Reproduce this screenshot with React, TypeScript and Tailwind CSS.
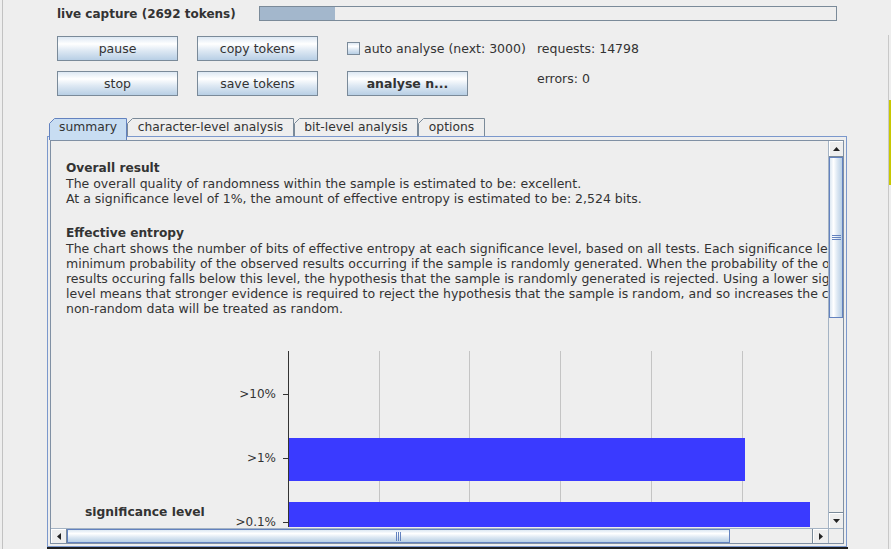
import React from 'react';

const oceanV = 'bg-[linear-gradient(to_bottom,#dde8f3_0%,#ffffff_30%,#dde8f3_60%,#b8cfe5_100%)]';
const oceanH = 'bg-[linear-gradient(to_right,#dde8f3_0%,#ffffff_30%,#dde8f3_60%,#b8cfe5_100%)]';

const paragraph = [
  'The chart shows the number of bits of effective entropy at each significance level, based on all tests. Each significance level defines a',
  'minimum probability of the observed results occurring if the sample is randomly generated. When the probability of the observed',
  'results occuring falls below this level, the hypothesis that the sample is randomly generated is rejected. Using a lower significance',
  'level means that stronger evidence is required to reject the hypothesis that the sample is random, and so increases the chance that',
  'non-random data will be treated as random.',
];

function Button({ children, bold }: { children: React.ReactNode; bold?: boolean }) {
  return (
    <button
      className={`w-[121px] h-[25px] flex-none flex items-center justify-center pt-px border border-[#7a8a99] ${oceanV} text-[12.5px] text-[#333] ${bold ? 'font-bold' : ''}`}
    >
      {children}
    </button>
  );
}

function Tab({ label, width, selected }: { label: string; width: number; selected?: boolean }) {
  const h = selected ? 22 : 18;
  return (
    <div className={`relative flex-none ${selected ? 'h-[22px] z-10' : 'h-[18px]'}`} style={{ width }}>
      <svg className="absolute inset-0" width={width} height={h}>
        <path
          d={`M0.5 ${h} V5.5 L5.5 0.5 H${width - 0.5} V${h}`}
          fill={selected ? '#c8ddf2' : '#eeeeee'}
          stroke={selected ? '#6382bf' : '#7a8a99'}
        />
      </svg>
      <span className="relative block text-center leading-[18px] text-[12.3px] text-[#333]">{label}</span>
    </div>
  );
}

function Arrow({ dir }: { dir: 'up' | 'down' | 'left' | 'right' }) {
  const d = {
    up: 'M0 4 L3.5 0 L7 4 Z',
    down: 'M0 0 L7 0 L3.5 4 Z',
    left: 'M4 0 L4 7 L0 3.5 Z',
    right: 'M0 0 L4 3.5 L0 7 Z',
  }[dir];
  const vertical = dir === 'up' || dir === 'down';
  return (
    <svg width={vertical ? 7 : 4} height={vertical ? 4 : 7}>
      <path d={d} fill="#222" />
    </svg>
  );
}

function VScroll() {
  return (
    <div className="w-[15px] flex-none flex flex-col border-l border-[#a4b3c4] bg-[#eeeeee]">
      <div className="h-[16px] flex-none flex items-center justify-center border-b border-[#7a8a99] bg-[#eeeeee] shadow-[inset_1px_1px_0_#ffffff]">
        <Arrow dir="up" />
      </div>
      <div className={`h-[161px] flex-none flex items-center justify-center border border-[#6382bf] ${oceanH}`}>
        <div className="flex flex-col gap-px">
          <div className="w-[9px] h-px bg-[#6382bf]" />
          <div className="w-[9px] h-px bg-[#6382bf]" />
          <div className="w-[9px] h-px bg-[#6382bf]" />
        </div>
      </div>
      <div className="flex-1" />
      <div className="h-[16px] flex-none flex items-center justify-center border-t border-[#7a8a99] bg-[#eeeeee] shadow-[inset_1px_1px_0_#ffffff]">
        <Arrow dir="down" />
      </div>
    </div>
  );
}

function HScroll() {
  return (
    <div className="flex-1 flex border-t border-[#a4b3c4] bg-[#eeeeee]">
      <div className="w-[16px] flex-none flex items-center justify-center border-r border-[#7a8a99] shadow-[inset_1px_1px_0_#ffffff]">
        <Arrow dir="left" />
      </div>
      <div className={`w-[663px] flex-none flex items-center justify-center border border-[#6382bf] ${oceanV}`}>
        <div className="flex gap-px">
          <div className="w-px h-[9px] bg-[#6382bf]" />
          <div className="w-px h-[9px] bg-[#6382bf]" />
          <div className="w-px h-[9px] bg-[#6382bf]" />
        </div>
      </div>
      <div className="flex-1" />
      <div className="w-[16px] flex-none flex items-center justify-center border-l border-[#7a8a99] shadow-[inset_1px_1px_0_#ffffff]">
        <Arrow dir="right" />
      </div>
    </div>
  );
}

function Chart() {
  const grid = [328, 418, 509, 600, 691];
  const ticks = [
    { y: 64, label: '>10%' },
    { y: 128, label: '>1%' },
    { y: 192, label: '>0.1%' },
  ];
  return (
    <svg width={776} height={197} className="block flex-none mt-[14px]">
      {grid.map((x) => (
        <line key={x} x1={x + 0.5} x2={x + 0.5} y1={21} y2={197} stroke="#c4c4c4" />
      ))}
      <rect x={238} y={108} width={456} height={43} fill="#3a3aff" />
      <rect x={238} y={172} width={521} height={43} fill="#3a3aff" />
      <line x1={237.5} x2={237.5} y1={21} y2={197} stroke="#333" />
      {ticks.map((t) => (
        <g key={t.label}>
          <line x1={232} x2={237} y1={t.y + 0.5} y2={t.y + 0.5} stroke="#333" />
          <text x={225} y={t.y + 4} textAnchor="end" fontSize={12} fill="#333" fontFamily="DejaVu Sans, sans-serif">
            {t.label}
          </text>
        </g>
      ))}
      <text x={34} y={186} fontSize={12.3} fontWeight="bold" fill="#333" fontFamily="DejaVu Sans, sans-serif">
        significance level
      </text>
    </svg>
  );
}

export default function App() {
  return (
    <div className="w-[891px] h-[549px] bg-[#eeeeee] flex overflow-hidden font-['DejaVu_Sans',sans-serif] text-[#333]">
      <div className="w-[2px] flex-none" />
      <div className="w-px flex-none bg-[#c2c2c2]" />

      <div className="flex-1 flex flex-col">
        {/* header */}
        <div className="mt-[6px] h-[15px] flex items-center pl-[54px]">
          <div className="w-[202px] flex-none text-[12px] font-bold whitespace-nowrap">live capture (2692 tokens)</div>
          <div className="w-[578px] h-[15px] flex-none border border-[#7a8a99] bg-[#eeeeee]">
            <div className="w-[75px] h-full bg-[#a3b7cc]" />
          </div>
        </div>

        {/* controls */}
        <div className="mt-[15px] flex items-center pl-[54px] text-[12.5px]">
          <Button>pause</Button>
          <div className="w-[19px] flex-none" />
          <Button>copy tokens</Button>
          <div className="w-[29px] flex-none" />
          <div className="w-[190px] flex-none flex items-center">
            <div className={`w-[13px] h-[13px] flex-none border border-[#7a8a99] ${oceanV}`} />
            <span className="ml-[4px] pt-px whitespace-nowrap">auto analyse (next: 3000)</span>
          </div>
          <span className="pt-px whitespace-nowrap">requests: 14798</span>
        </div>
        <div className="mt-[10px] flex items-start pl-[54px] text-[12.5px]">
          <Button>stop</Button>
          <div className="w-[19px] flex-none" />
          <Button>save tokens</Button>
          <div className="w-[29px] flex-none" />
          <Button bold>analyse n...</Button>
          <span className="ml-[69px] leading-[15px] whitespace-nowrap">errors: 0</span>
        </div>

        {/* tabs */}
        <div className="mt-[22px] h-[18px] flex items-start pl-[46px]">
          <Tab label="summary" width={78} selected />
          <Tab label="character-level analysis" width={167} />
          <Tab label="bit-level analysis" width={124} />
          <Tab label="options" width={67} />
        </div>

        {/* tab content */}
        <div className="ml-[44px] w-[800px] h-[411px] flex-none flex flex-col border border-[#7b98cc] pt-[3px] px-[2px] pb-[2px]">
          <div className="flex-1 min-h-0 flex flex-col border border-[#8090a4]">
            <div className="flex-1 min-h-0 flex">
              <div className="flex-1 min-w-0 overflow-hidden flex flex-col bg-[#eeeeee]">
                <div className="pl-[15px] pt-[20px] text-[12.5px] leading-[15px] whitespace-nowrap">
                  <div className="font-bold text-[12.2px]">Overall result</div>
                  <div>The overall quality of randomness within the sample is estimated to be: excellent.</div>
                  <div>At a significance level of 1%, the amount of effective entropy is estimated to be: 2,524 bits.</div>
                  <div className="mt-[20px] font-bold text-[12.2px]">Effective entropy</div>
                  {paragraph.map((line) => (
                    <div key={line}>{line}</div>
                  ))}
                </div>
                <Chart />
              </div>
              <VScroll />
            </div>
            <div className="h-[15px] flex-none flex">
              <HScroll />
              <div className="w-[15px] flex-none border-t border-l border-[#a4b3c4] bg-[#eeeeee]" />
            </div>
          </div>
        </div>
        <div className="ml-[44px] w-[801px] h-[3px] flex-none bg-[#1e1e1e]" />
      </div>

      {/* right window edge */}
      <div className="w-[4px] flex-none flex">
        <div className="w-px flex-none" />
        <div className="w-px flex-none mt-[35px] bg-[#c8c8c8]" />
        <div className="w-[2px] flex-none flex flex-col">
          <div className="h-[100px]" />
          <div className="h-[85px] bg-[#c8c800]" />
        </div>
      </div>
    </div>
  );
}
